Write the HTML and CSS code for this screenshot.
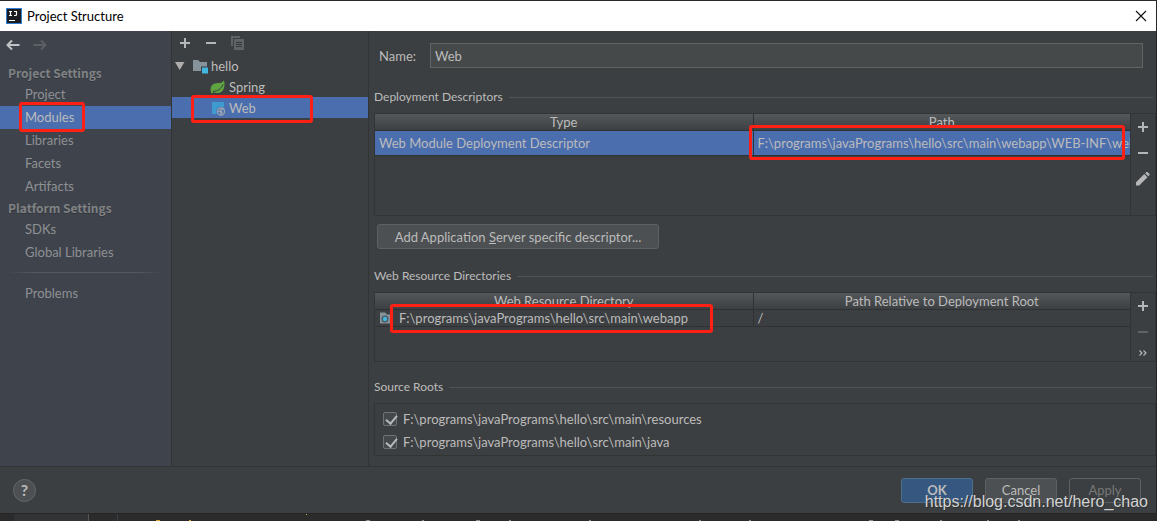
FILE: index.html
```html
<!DOCTYPE html>
<html lang="en">
<head>
<meta charset="utf-8">
<title>Project Structure</title>
<link rel="stylesheet" href="styles.css">
</head>
<body>
<div class="dialog">
  <header class="titlebar">
    <svg class="app-logo" width="16" height="16" viewBox="0 0 16 16" aria-hidden="true"><rect x=".5" y=".5" width="15" height="15" fill="#1b1b22" stroke="#2f7fd6"/><path d="M3 3.500h3M4.500 3.500v4M3 7.500h3M8 3.500h2.500v3q0 1-1 1H8" fill="none" stroke="#fff" stroke-width="1.200"/><path d="M3 12.500h6" stroke="#fff"/></svg>
    <h1 class="title">Project Structure</h1>
    <button class="icon-button" aria-label="Close"><svg width="12" height="12" viewBox="0 0 12 12"><path d="M1 1l10 10M11 1L1 11" stroke="#111" stroke-width="1.100"/></svg></button>
  </header>

  <main class="main">
    <nav class="sidebar">
      <div class="history">
        <button class="icon-button" aria-label="Back"><svg width="14" height="12" viewBox="0 0 14 12"><path d="M13.500 6H2M6 1.500L1.500 6 6 10.500" fill="none" stroke="#c0c2c4" stroke-width="2"/></svg></button>
        <button class="icon-button" aria-label="Forward" disabled><svg width="14" height="12" viewBox="0 0 14 12"><path d="M.5 6H12M8 1.500L12.500 6 8 10.500" fill="none" stroke="#5d5f62" stroke-width="2"/></svg></button>
      </div>
      <h2 class="nav-heading">Project Settings</h2>
      <a class="nav-item" href="#">Project</a>
      <a class="nav-item selected" href="#">Modules<span class="mark mark-nav"></span></a>
      <a class="nav-item" href="#">Libraries</a>
      <a class="nav-item" href="#">Facets</a>
      <a class="nav-item" href="#">Artifacts</a>
      <h2 class="nav-heading">Platform Settings</h2>
      <a class="nav-item" href="#">SDKs</a>
      <a class="nav-item" href="#">Global Libraries</a>
      <hr class="nav-line">
      <a class="nav-item" href="#">Problems</a>
    </nav>

    <section class="tree">
      <div class="tree-tools">
        <button class="icon-button" aria-label="Add"><svg width="12" height="12" viewBox="0 0 12 12"><path d="M1 6h10M6 1v10" stroke="#b4b6b8" stroke-width="2"/></svg></button>
        <button class="icon-button" aria-label="Remove"><svg width="12" height="12" viewBox="0 0 12 12"><path d="M1 6h10" stroke="#b4b6b8" stroke-width="2"/></svg></button>
        <button class="icon-button" aria-label="Copy" disabled><svg width="14" height="14" viewBox="0 0 14 14"><path d="M1 10V1h8" fill="none" stroke="#606365" stroke-width="2"/><path d="M3 3h10v11H3z" fill="#606365"/><path d="M5 6.500h6M5 8.500h6M5 10.500h6" stroke="#35383a"/></svg></button>
      </div>
      <div class="tree-row">
        <svg width="10" height="16" viewBox="0 0 10 16"><path d="M0 4h9.500L4.700 12z" fill="#adadad"/></svg>
        <svg class="folder" width="16" height="16" viewBox="0 0 16 16"><path d="M1 2h5l2 2h7v9H1z" fill="#87939a"/><path d="M9 8.500h7V16H9z" fill="#3c3f41"/><path d="M10 9.500h6V15.500h-6z" fill="#40b6e0"/></svg>
        <span>hello</span>
      </div>
      <div class="tree-row child">
        <svg width="16" height="16" viewBox="0 0 16 16"><path d="M14 1.500C15.500 7 14 14 7 14q-2.500 0-3.500-.8L2 14.500l-1-1C-1 5 5 4 9 4q3 0 5-2.500z" fill="#5fa341"/><path d="M3 12.500C8 12 11 10 13 5.500" fill="none" stroke="#3c3f41" stroke-width="1"/></svg>
        <span>Spring</span>
      </div>
      <div class="tree-row child selected">
        <svg width="16" height="16" viewBox="0 0 16 16"><path d="M2 2h12v12H2z" fill="#3e9bd0"/><circle cx="11" cy="11.500" r="4.800" fill="#4b6eaf"/><circle cx="11" cy="11.500" r="3.500" fill="#4b6eaf" stroke="#9aa7b0" stroke-width="1.300"/><path d="M8 11l3 1v2.500l1-2-1.500-2 2-2 2 1" fill="none" stroke="#9aa7b0" stroke-width="1.300"/></svg>
        <span>Web</span><span class="mark mark-tree"></span>
      </div>
    </section>

    <section class="editor">
      <div class="name-row"><label class="name-label" for="name">Name:</label><input class="name-input" id="name" type="text" value="Web"></div>

      <h2 class="group-title">Deployment Descriptors</h2>
      <div class="table-panel tall">
        <div class="table-area">
          <table class="grid">
            <thead><tr><th>Type</th><th>Path</th></tr></thead>
            <tbody><tr class="selected"><td>Web Module Deployment Descriptor</td><td>F:\programs\javaPrograms\hello\src\main\webapp\WEB-INF\web.xml</td></tr></tbody>
          </table>
          <span class="mark mark-path"></span>
        </div>
        <div class="side-tools">
          <button class="icon-button" aria-label="Add descriptor"><svg width="12" height="12" viewBox="0 0 12 12"><path d="M1 6h10M6 1v10" stroke="#b4b6b8" stroke-width="2"/></svg></button>
          <button class="icon-button" aria-label="Remove descriptor"><svg width="12" height="12" viewBox="0 0 12 12"><path d="M1 6h10" stroke="#b4b6b8" stroke-width="2"/></svg></button>
          <button class="icon-button" aria-label="Edit descriptor"><svg width="14" height="14" viewBox="0 0 14 14"><path d="M0 13.500v-3.200L8.300 2l3.200 3.200-8.300 8.300zM9.200 1.200L10.500 0q.5-.3 1 0l2 2q.4.500 0 1l-1.200 1.300z" fill="#b4b6b8"/></svg></button>
        </div>
      </div>
      <button class="button descriptor-button">Add Application <u>S</u>erver specific descriptor...</button>

      <h2 class="group-title">Web Resource Directories</h2>
      <div class="table-panel short">
        <div class="table-area">
          <table class="grid">
            <thead><tr><th>Web Resource Directory</th><th>Path Relative to Deployment Root</th></tr></thead>
            <tbody><tr><td><span class="dir"><svg width="14" height="14" viewBox="0 0 14 14"><path d="M1 1.500h5l2 2h6v9H1z" fill="#87939a"/><circle cx="6" cy="8" r="3.500" fill="#4b565c"/><circle cx="6" cy="8" r="2.200" fill="#40b6e0"/></svg>F:\programs\javaPrograms\hello\src\main\webapp</span></td><td>/</td></tr></tbody>
          </table>
          <span class="mark mark-dir"></span>
        </div>
        <div class="side-tools">
          <button class="icon-button" aria-label="Add directory"><svg width="12" height="12" viewBox="0 0 12 12"><path d="M1 6h10M6 1v10" stroke="#b4b6b8" stroke-width="2"/></svg></button>
          <button class="icon-button" aria-label="Remove directory" disabled><svg width="12" height="12" viewBox="0 0 12 12"><path d="M1 6h10" stroke="#606365" stroke-width="2"/></svg></button>
          <button class="icon-button more" aria-label="More"><svg width="8" height="6" viewBox="0 0 8 6"><path d="M.5.500L3 3 .5 5.500M4.500.500L7 3 4.500 5.500" fill="none" stroke="#b4b6b8" stroke-width="1.200"/></svg></button>
        </div>
      </div>

      <h2 class="group-title">Source Roots</h2>
      <div class="roots">
        <label class="root"><input type="checkbox" checked>F:\programs\javaPrograms\hello\src\main\resources</label>
        <label class="root"><input type="checkbox" checked>F:\programs\javaPrograms\hello\src\main\java</label>
      </div>
    </section>
  </main>

  <footer class="footer">
    <button class="help" aria-label="Help">?</button>
    <button class="button primary">OK</button>
    <button class="button">Cancel</button>
    <button class="button" disabled>Apply</button>
    <span class="watermark">https://blog.csdn.net/hero_chao</span>
  </footer>
</div>
<div class="backdrop"><span class="gutter"></span><span class="fold"></span><svg width="920" height="7" viewBox="0 0 920 7" aria-hidden="true"><path d="M38 6.500h4M71 6.500h2M188 .5h1" stroke="#e0a33c"/><path d="M248 6.500h4M304 6.500h2M358 6.500h4M391 6.500h2M471 6.500h2M581 6.500h2M631 6.500h2M751 6.500h4M777 6.500h4M822 6.500h2M869 6.500h2M900 6.500h2" stroke="#8b8d90"/></svg></div>
</body>
</html>
```
FILE: styles.css
```css
* { box-sizing: border-box; }
body {
  margin: 0;
  min-height: 100vh;
  display: flex;
  flex-direction: column;
  background: #2b2b2b;
  color: #bbbbbb;
  font: 13px/20px Lato, "Noto Sans", sans-serif;
  overflow: hidden;
}
button, input { font: inherit; color: inherit; }
h1, h2 { margin: 0; font-size: 13px; font-weight: 400; }
svg { display: block; flex: none; }
a { color: inherit; text-decoration: none; }

.dialog {
  flex: 1;
  display: flex;
  flex-direction: column;
  border-top: 1px solid #2b2b2b;
  border-right: 1px solid #242628;
  background: #3c3f41;
}
.titlebar {
  display: flex;
  align-items: center;
  gap: 5px;
  height: 30px;
  padding: 0 9px 0 6px;
  background: #fff;
  color: #000;
}
.title { flex: 1; }
.icon-button {
  display: grid;
  place-items: center;
  padding: 0;
  border: 0;
  background: none;
}
.main { flex: 1; display: flex; }

.sidebar {
  flex: none;
  width: 172px;
  border-right: 1px solid #323435;
  background: #3e434c;
  color: #8f9193;
}
.history { display: flex; gap: 13px; height: 32px; padding: 0 6px 4px; }
.nav-heading {
  padding-left: 8px;
  font: 700 12px/20px "Noto Sans CJK SC", "Noto Sans", sans-serif;
  color: #808284;
  text-shadow: 0 1px #33363b;
}
.nav-item {
  display: block;
  position: relative;
  padding-left: 25px;
  line-height: 23px;
}
.selected { background: #4b6eaf; color: #bbbbbb; }
.nav-line {
  height: 1px;
  margin: 8px 8px 9px;
  border: 0;
  background: linear-gradient(90deg, transparent, #56585b 15%, #56585b 85%, transparent);
}

.mark {
  position: absolute;
  z-index: 1;
  border: 3px solid #ff2015;
  border-radius: 3px;
  pointer-events: none;
}
.mark-nav { left: 19px; top: -4px; width: 66px; height: 30px; }
.mark-tree { left: 19px; top: -2px; width: 122px; height: 28px; }
.mark-path { left: 50%; right: 5px; top: 11px; height: 35px; margin-left: -4px; }
.mark-dir { left: 15px; top: 11px; width: 323px; height: 29px; }

.tree { flex: none; width: 197px; border-right: 1px solid #323435; }
.tree-tools { display: flex; gap: 14px; height: 24px; padding-left: 7px; }
.tree-row {
  position: relative;
  display: flex;
  align-items: center;
  gap: 3px;
  height: 21px;
  padding-left: 3px;
}
.folder { margin-left: 4px; }
.child { padding-left: 38px; }

.editor {
  flex: 1;
  min-width: 0;
  padding: 12px 0 10px 5px;
}
.name-row { display: flex; align-items: center; padding: 0 13px 0 5px; }
.name-label { width: 51px; }
.name-input {
  flex: 1;
  min-width: 0;
  height: 25px;
  padding: 0 4px;
  border: 1px solid #646464;
  background: #45494a;
}
.group-title {
  display: flex;
  align-items: center;
  gap: 6px;
  font-size: 12px;
  line-height: 20px;
  padding-right: 3px;
}
.group-title::after { content: ""; flex: 1; height: 1px; background: #515456; }
.name-row + .group-title { margin-top: 19px; }
.descriptor-button + .group-title { margin-top: 17px; }
.table-panel + .group-title { margin-top: 15px; }

.table-panel { display: flex; margin-top: 6px; border: 1px solid #323435; }
.tall { height: 103px; }
.short { height: 70px; }
.table-area { position: relative; flex: 1; min-width: 0; }
.grid { width: 100%; table-layout: fixed; border-collapse: separate; border-spacing: 0; }
.grid th {
  height: 17px;
  padding: 0;
  border-bottom: 1px solid #2f3133;
  background: linear-gradient(#55585b, #3d4042);
  font-weight: 400;
  line-height: 16px;
}
.grid td {
  padding: 0 4px;
  border-bottom: 1px solid #2f3133;
  line-height: 16px;
  white-space: nowrap;
  overflow: hidden;
}
.grid th + th, .grid td + td { border-left: 1px solid #2f3133; }
.tall td { line-height: 24px; }
.dir { display: flex; align-items: center; gap: 6px; }
.side-tools {
  display: flex;
  flex-direction: column;
  width: 25px;
  border-left: 1px solid #323435;
}
.side-tools .icon-button { height: 26px; }
.side-tools .more { height: 16px; }

.button {
  height: 25px;
  padding: 0 13px;
  border: 1px solid #5e6163;
  border-radius: 3px;
  background: #4c5052;
  line-height: 20px;
}
.descriptor-button { display: block; min-width: 282px; margin: 8px 0 0 3px; }

.roots { margin-top: 6px; padding: 3px 8px 2px; border: 1px solid #323435; }
.root { display: flex; align-items: center; gap: 6px; height: 23px; }
.root input {
  appearance: none;
  width: 14px;
  height: 14px;
  margin: 0;
  border: 1px solid #6f7274;
  border-radius: 2px;
  background: #43494a;
}
.root input:checked::before {
  content: "";
  display: block;
  width: 5px;
  height: 9px;
  margin: 0 0 0 4px;
  border: solid #b8babc;
  border-width: 0 2px 2px 0;
  transform: rotate(40deg);
}

.footer {
  position: relative;
  display: flex;
  align-items: center;
  gap: 12px;
  height: 47px;
  padding: 0 15px 0 13px;
  border-top: 1px solid #323435;
}
.footer .button { width: 72px; padding: 0; }
.help {
  width: 23px;
  height: 23px;
  margin-right: auto;
  padding: 0;
  border: 1px solid #65686a;
  border-radius: 50%;
  background: #4c5052;
  font-size: 16px;
  font-weight: 700;
  line-height: 20px;
}
.footer .primary { border-color: #4c708c; background: #365880; font-weight: 700; }
.footer .button:disabled { background: none; color: #777777; }
.watermark {
  position: absolute;
  right: 8px;
  bottom: 1px;
  font: 16px/20px "Liberation Sans", Arial, sans-serif;
  color: #d2d3d4;
  text-shadow: 1px 1px #303335;
}
.backdrop { display: flex; height: 8px; border-top: 1px solid #242628; overflow: hidden; }
.gutter { flex: none; width: 75px; margin-left: 14px; background: #313335; border-right: 1px solid #555555; }
.fold { flex: none; width: 29px; border-right: 1px solid #3c3f41; }
```
